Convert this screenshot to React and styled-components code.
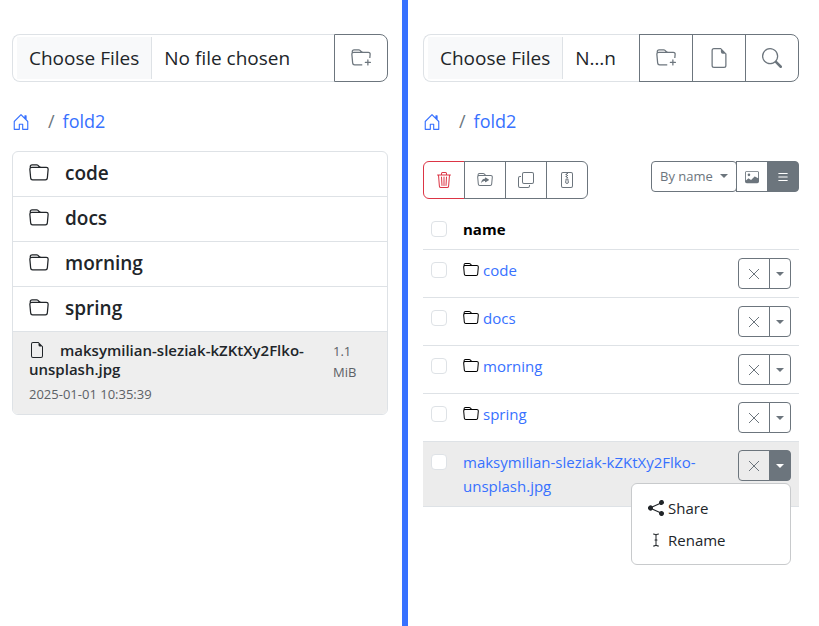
import React from "react";
import styled, { createGlobalStyle, css } from "styled-components";
import {
  BsCopy,
  BsCursorText,
  BsFileEarmark,
  BsFileZip,
  BsFolder,
  BsFolderPlus,
  BsFolderSymlink,
  BsHouseDoor,
  BsImage,
  BsList,
  BsSearch,
  BsShareFill,
  BsTrash3,
} from "react-icons/bs";

const color = {
  accent: "#3771ff",
  text: "#212529",
  grey: "#6c757d",
  danger: "#dc3545",
  line: "#dee2e6",
  light: "#f8f9fa",
};

const GlobalStyle = createGlobalStyle`
  *, *::before, *::after { box-sizing: border-box; }
  body {
    margin: 0;
    background: #fff;
    color: ${color.text};
    font: 400 15px/24px "Segoe UI", "Open Sans", "Noto Sans", sans-serif;
  }
  button, input, select { font-family: inherit; margin: 0; }
  svg { display: block; flex: none; }
`;

const Split = styled.main`
  display: grid;
  grid-template-columns: 408fr 411fr;
  min-height: 100vh;
`;

const Pane = styled.section`
  min-width: 0;
  padding: 34px 20px 24px 15px;
  ${(p) =>
    p.$first &&
    css`
      padding: 34px 14px 24px 12px;
      border-right: 6px solid ${color.accent};
    `}
`;

const UploadBar = styled.div`
  display: flex;
  height: 48px;
`;

const FileInput = styled.input`
  flex: 1 1 0;
  width: 0;
  min-width: 0;
  height: 48px;
  padding: 2px 20px 2px 4px;
  border: 1px solid ${color.line};
  border-right: 0;
  border-radius: 8px 0 0 8px;
  background: #fff;
  color: ${color.text};
  font-size: 19px;
  line-height: 30px;

  &::file-selector-button {
    height: 42px;
    margin: 0 12px 0 0;
    padding: 0 12px;
    border: 0;
    border-right: 1px solid ${color.line};
    background: ${color.light};
    color: ${color.text};
    font: inherit;
  }
`;

const Button = styled.button`
  display: flex;
  align-items: center;
  justify-content: center;
  padding: 0;
  width: ${(p) => p.$w}px;
  height: ${(p) => p.$h}px;
  border: 1px solid ${(p) => (p.$danger ? color.danger : color.grey)};
  background: ${(p) => (p.$active ? color.grey : "transparent")};
  color: ${(p) => (p.$active ? "#fff" : p.$danger ? color.danger : color.grey)};
  & + & {
    margin-left: -1px;
  }
  &:last-of-type {
    border-radius: 0 ${(p) => p.$r}px ${(p) => p.$r}px 0;
  }
`;

const ButtonGroup = styled.div`
  display: flex;
  position: relative;
  width: max-content;
  & > button:first-child {
    border-radius: ${(p) => p.$r}px 0 0 ${(p) => p.$r}px;
  }
`;

const Breadcrumb = styled.nav`
  display: flex;
  align-items: center;
  height: 27px;
  margin-top: 26px;
  font-size: 18px;
  line-height: 27px;
`;

const Crumb = styled.a`
  color: ${color.accent};
  text-decoration: none;
`;

const Slash = styled.span`
  padding: 0 8px 0 18px;
  color: ${color.grey};
`;

const List = styled.ul`
  list-style: none;
  margin: 16px 0 0;
  padding: 0;
  border: 1px solid ${color.line};
  border-radius: 6px;
  overflow: hidden;
`;

const FolderItem = styled.li`
  display: flex;
  align-items: center;
  gap: 16px;
  height: 45px;
  padding: 0 16px 2px;
  border-bottom: 1px solid ${color.line};
`;

const FolderName = styled.h2`
  margin: 0;
  font-size: 19px;
  line-height: 24px;
  font-weight: 600;
`;

const FileItem = styled.li`
  display: flex;
  justify-content: space-between;
  padding: 9px 16px;
  background: #eee;
`;

const FileName = styled.h3`
  margin: 0 0 5px;
  font-size: 15px;
  line-height: 19px;
  font-weight: 600;
  svg {
    display: inline-block;
    margin-right: 15px;
    vertical-align: -2px;
  }
`;

const Small = styled.small`
  display: block;
  color: #5c6166;
  font-size: 13px;
  line-height: 21px;
`;

const FileSize = styled(Small)`
  flex: none;
  width: 38px;
`;

const FileInfo = styled.div`
  width: 284px;
  min-width: 0;
`;

const Toolbar = styled.div`
  display: flex;
  justify-content: space-between;
  align-items: flex-start;
  margin: 26px 0 10px;
`;

const SortBox = styled.label`
  position: relative;
  margin-right: -1px;
  &::after {
    content: "";
    position: absolute;
    top: 13px;
    right: 9px;
    border: 4px solid transparent;
    border-top-color: ${color.grey};
    border-bottom: 0;
    pointer-events: none;
  }
`;

const SortSelect = styled.select`
  appearance: none;
  display: block;
  width: 86px;
  height: 31px;
  padding: 0 8px;
  border: 1px solid ${color.grey};
  border-radius: 4px;
  background: transparent;
  color: ${color.grey};
  font-size: 13px;
  line-height: 21px;
`;

const ViewControls = styled.div`
  display: flex;
`;

const Table = styled.table`
  width: 100%;
  border-collapse: separate;
  border-spacing: 0;
`;

const Row = styled.tr`
  background: ${(p) => (p.$active ? "#ececec" : "transparent")};
`;

const Cell = styled.td`
  padding: 8px;
  border-bottom: 1px solid ${color.line};
  text-align: left;
  vertical-align: top;
  width: ${(p) => (p.$w ? `${p.$w}px` : "auto")};
`;

const Heading = styled(Cell)`
  color: #000;
  font-weight: 700;
`;

const Checkbox = styled.input`
  appearance: none;
  display: block;
  width: 16px;
  height: 16px;
  margin-top: 4px;
  border: 1px solid ${color.line};
  border-radius: 4px;
  background: #fff;
  &:checked {
    background: ${color.accent};
  }
`;

const NameLine = styled.div`
  display: flex;
  gap: 4px;
  color: #000;
  svg {
    margin-top: 4px;
  }
`;

const Caret = styled.span`
  border: 4px solid transparent;
  border-top-color: currentColor;
  border-bottom: 0;
`;

const Menu = styled.div`
  position: absolute;
  top: calc(100% + 2px);
  right: 0;
  width: 160px;
  padding: 8px 0;
  border: 1px solid #c8cacc;
  border-radius: 6px;
  background: #fff;
`;

const MenuItem = styled.button`
  display: flex;
  align-items: center;
  gap: 4px;
  width: 100%;
  height: 32px;
  padding: 0 16px;
  border: 0;
  background: transparent;
  color: ${color.text};
  font-size: 15px;
`;

const CrossIcon = () => (
  <svg width="12" height="12" viewBox="0 0 12 12" aria-hidden="true">
    <path d="M1 1l10 10M11 1L1 11" stroke="currentColor" strokeWidth="1" fill="none" />
  </svg>
);

const folders = ["code", "docs", "morning", "spring"];
const fileName = "maksymilian-sleziak-kZKtXy2Flko-unsplash.jpg";

const Path = () => (
  <Breadcrumb aria-label="Path">
    <Crumb href="#home" aria-label="Home">
      <BsHouseDoor size={18} />
    </Crumb>
    <Slash>/</Slash>
    <Crumb href="#fold2">fold2</Crumb>
  </Breadcrumb>
);

const RowActions = ({ open }) => (
  <ButtonGroup $r={4}>
    <Button $w={32} $h={31} $r={4} aria-label="Delete">
      <CrossIcon />
    </Button>
    <Button
      $w={22}
      $h={31}
      $r={4}
      $active={open}
      aria-label="More actions"
      aria-expanded={!!open}
    >
      <Caret />
    </Button>
    {open && (
      <Menu role="menu">
        <MenuItem role="menuitem">
          <BsShareFill size={16} />
          Share
        </MenuItem>
        <MenuItem role="menuitem">
          <BsCursorText size={16} />
          Rename
        </MenuItem>
      </Menu>
    )}
  </ButtonGroup>
);

const TableRow = ({ name, folder, open }) => (
  <Row $active={open}>
    <Cell>
      <Checkbox type="checkbox" aria-label={`Select ${name}`} />
    </Cell>
    <Cell>
      <NameLine>
        {folder && <BsFolder size={16} />}
        <Crumb href={`#${name}`}>{name}</Crumb>
      </NameLine>
    </Cell>
    <Cell>
      <RowActions open={open} />
    </Cell>
  </Row>
);

export default function App() {
  return (
    <>
      <GlobalStyle />
      <Split>
        <Pane $first>
          <UploadBar>
            <FileInput type="file" multiple aria-label="Upload files" />
            <Button $w={54} $h={48} $r={8} aria-label="New folder">
              <BsFolderPlus size={20} />
            </Button>
          </UploadBar>
          <Path />
          <List>
            {folders.map((name) => (
              <FolderItem key={name}>
                <BsFolder size={20} />
                <FolderName>{name}</FolderName>
              </FolderItem>
            ))}
            <FileItem>
              <FileInfo>
                <FileName>
                  <BsFileEarmark size={16} />
                  {fileName}
                </FileName>
                <Small>2025-01-01 10:35:39</Small>
              </FileInfo>
              <FileSize>1.1 MiB</FileSize>
            </FileItem>
          </List>
        </Pane>

        <Pane>
          <UploadBar>
            <FileInput type="file" multiple aria-label="Upload files" />
            <Button $w={54} $h={48} $r={8} aria-label="New folder">
              <BsFolderPlus size={20} />
            </Button>
            <Button $w={54} $h={48} $r={8} aria-label="New file">
              <BsFileEarmark size={20} />
            </Button>
            <Button $w={54} $h={48} $r={8} aria-label="Search">
              <BsSearch size={20} />
            </Button>
          </UploadBar>
          <Path />
          <Toolbar>
            <ButtonGroup $r={6}>
              <Button $w={42} $h={38} $r={6} $danger aria-label="Delete selected">
                <BsTrash3 size={16} />
              </Button>
              <Button $w={42} $h={38} $r={6} aria-label="Move">
                <BsFolderSymlink size={16} />
              </Button>
              <Button $w={42} $h={38} $r={6} aria-label="Copy">
                <BsCopy size={16} />
              </Button>
              <Button $w={42} $h={38} $r={6} aria-label="Zip">
                <BsFileZip size={16} />
              </Button>
            </ButtonGroup>
            <ViewControls>
              <SortBox>
                <SortSelect aria-label="Sort" defaultValue="name">
                  <option value="name">By name</option>
                </SortSelect>
              </SortBox>
              <Button $w={32} $h={31} $r={4} aria-label="Image view">
                <BsImage size={14} />
              </Button>
              <Button $w={32} $h={31} $r={4} $active aria-label="List view">
                <BsList size={14} />
              </Button>
            </ViewControls>
          </Toolbar>
          <Table>
            <thead>
              <Row>
                <Heading as="th" $w={32}>
                  <Checkbox type="checkbox" aria-label="Select all" />
                </Heading>
                <Heading as="th">name</Heading>
                <Heading as="th" $w={69} aria-label="Actions" />
              </Row>
            </thead>
            <tbody>
              {folders.map((name) => (
                <TableRow key={name} name={name} folder />
              ))}
              <TableRow name={fileName} open />
            </tbody>
          </Table>
        </Pane>
      </Split>
    </>
  );
}
